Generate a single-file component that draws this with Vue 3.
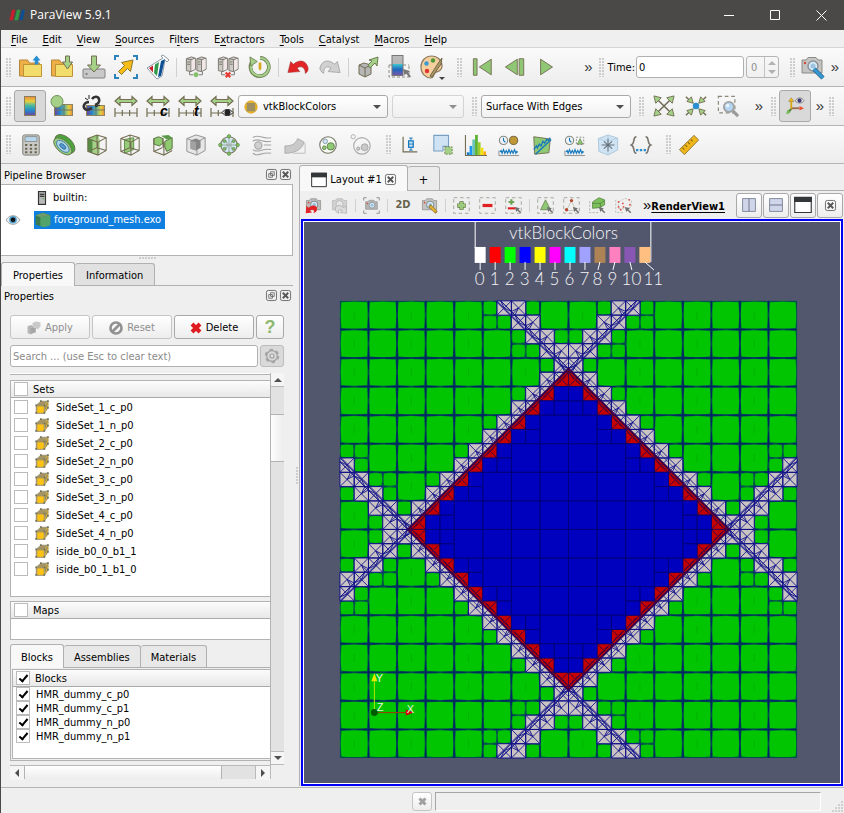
<script setup>
import { h, reactive, ref } from 'vue'

const Icon = (props) =>
  h('svg', {
    class: 'icon',
    width: props.size || 24,
    height: props.size || 24,
    viewBox: props.box || '0 0 24 24',
    'aria-hidden': 'true',
    innerHTML: icons[props.name],
  })
Icon.props = ['name', 'size', 'box']

const line = '#736d52'
const green = '#a5d088'
const server = `<g stroke="#77736a" stroke-width="1"><path d="M1.500 3l5.500-2 4.500 1.500v12l-5 2.500-5-1z" fill="#cdcac5"/><path d="M13 3l5-2 5 1.500v12l-5 2.500-5-1z" fill="#cdcac5"/><path d="M1.500 3l5 1v13M6.500 4l5-1.500M13 3l5 1v13M18 4l5-1.500M2 6.500h3.500M2 9h3.500M14 6.500h3M14 9h3" fill="none"/><path d="M7 4.500l4-1.500v11l-4 2zM18.500 4.500l4-1.500v11l-4 2z" fill="#f0e6e8" stroke="none"/><path d="M5 17v3.500h4M19 17v3.500h-4" fill="none"/></g>`
const cubeWire = `<path d="M2 5l10-4 10 3v14l-9 5-11-4zM2 5l11 4 9-5M13 9v14M12 1v14l-10 4M12 15l10 3" fill="none" stroke="${line}" stroke-width="1.100"/>`
const ruler = `<g stroke="${line}" stroke-width="1.200" fill="none"><path d="M1 19h22M1 14v9M8.300 16v6M15.600 16v6M23 14v9"/><path d="M1 7l5-4.500v3h12v-3L23 7l-5 4.500v-3H6v3z" fill="${green}"/></g>`
const wave = `<path d="M1 18v5.500h22" fill="none" stroke="#8a8a8a" stroke-width="1"/><path d="M2 19.500l1.500-1.500 1 3 1.500-4 1.500 4 1.500-3 1.500 3 1.500-4 1.500 4 1.500-3 1.500 3 1.500-4 1.500 4 1-2 1 1" fill="none" stroke="#1779bd" stroke-width="1.300"/>`
const clock = `<circle cx="6" cy="7" r="4.500" fill="#eef4fa" stroke="#8a8a80" stroke-width="1.200"/><path d="M6 4v3l2 2" fill="none" stroke="#1779bd" stroke-width="1.200"/>`
const camera = (c) => `<path d="M2 5h4l2-2.500h8L18 5h4v13H2z" fill="${c}" stroke="#8b8b87"/><circle cx="13" cy="11" r="5" fill="#d8ebf7" stroke="#8b9298" stroke-width="1.500"/><circle cx="13" cy="11" r="2.500" fill="#9cc3df"/><circle cx="5" cy="8" r="1.200" fill="#d84a3a"/>`
const dashBox = `<rect x="1" y="1" width="22" height="22" fill="none" stroke="#9c9c92" stroke-width="1.200" stroke-dasharray="5 4"/>`
const pointer = `<path d="M14 14l7 2-2 1.500 4 4-1.500 1.500-4-4L16 21z" fill="#707070"/>`

const icons = {
  logo: `<path d="M4.500 4h5L6 20H0.500z" fill="#c5202b"/><path d="M12 4h5l-3.500 16H8z" fill="#2f9a48"/><path d="M19.500 4h4.500l-3.500 16h-5z" fill="#0c4f94"/>`,
  open: `<path d="M1.500 5h8l2 3h10v13h-20z" fill="#eeb046" stroke="#b5853a"/><path d="M5.500 9.500h18v12h-18z" fill="#f2dc6c" stroke="#c09436"/><path d="M18.500 0.500l4 5h-2.200v4h-3.600v-4h-2.200z" fill="#2a8fd0"/>`,
  openRecent: `<path d="M1.500 5h8l2 3h10v13h-20z" fill="#eeb046" stroke="#b5853a"/><path d="M5.500 9.500h17v12h-17z" fill="#f2dc6c" stroke="#c09436"/><path d="M15.500 1h4v6h3l-5 7-5-7h3z" fill="${green}" stroke="${line}"/>`,
  save: `<rect x="1" y="14" width="22" height="9" rx="1" fill="#c9c9c9" stroke="#808080"/><path d="M9.500 1h5v9h4L12 17 5.500 10h4z" fill="${green}" stroke="${line}"/><circle cx="4.500" cy="19" r="1.200" fill="#888"/>`,
  extract: `<path d="M1 5V1h4M19 1h4v4M23 19v4h-4M5 23H1v-4" fill="none" stroke="#2a83bb" stroke-width="2"/><path d="M4.500 16.500l6-6-3-3L19 5l-2.500 11.500-3-3-6 6z" fill="#f6bd16" stroke="#8b7434"/>`,
  flask: `<path d="M1 13L17 3l-2-2 2-1 6 5-2 2-2-2-3 16-5 3z" fill="#fff" stroke="#8d9ba5"/><path d="M3 13l4-2.500v7z" fill="#c5202b"/><path d="M9 9.500l4-2.500-2 14-3-3z" fill="#2f9a48"/><path d="M15 6l4-2-4 17-3 1z" fill="#0c4f94"/>`,
  connect: `${server}<circle cx="12" cy="20.500" r="2.700" fill="#82c168"/>`,
  disconnect: `${server}<path d="M9.500 18l5 5M14.500 18l-5 5" stroke="#e63b34" stroke-width="2.500"/>`,
  reset: `<path d="M5 4.500A10 10 0 1 0 12 2" fill="none" stroke="#718258" stroke-width="4"/><path d="M5 5A9.800 9.800 0 1 0 12 2.200" fill="none" stroke="#a5d088" stroke-width="2.200"/><path d="M1 1l1 10 7-5z" fill="${green}" stroke="#718258"/><path d="M10.500 7h3v7l-1.500 2-1.500-2z" fill="#d5a820"/>`,
  undo: `<path d="M1 18l3-12 3 3c7-6 14-4 16 4 0 2 0 4-3 6 0-6-4-9-9-6l3 4z" fill="#e12426" stroke="#9c3633" stroke-width=".6"/>`,
  redo: `<path d="M23 18L20 6l-3 3C10 3 3 5 1 13c0 2 1 4 4 6 0-6 3-9 8-6l-3 4z" fill="#d0d0d0" stroke="#a5a5a5" stroke-width="1"/>`,
  loadState: `<path d="M3 10l5-2 7 2v9l-6 3-6-3z" fill="#b6b6b6" stroke="${line}"/><path d="M3 10l6 3 6-3M9 13v9" fill="none" stroke="${line}"/><path d="M12 10l4-4-3-1 9-3-1 9-2-3-5 5z" fill="${green}" stroke="#6c7d50"/>`,
  findData: `<rect x="4" y="0.500" width="11" height="20" fill="url(#coolBar)" stroke="#777"/><path d="M1 10v12h20V10M1 10h3M15 10h6" fill="none" stroke="#8c8c80" stroke-dasharray="3 2"/><path d="M15 14l7 2-2 1.500 3 4-1.500 1-3.500-4-1.500 2z" fill="#777"/>`,
  palette: `<path d="M12 1C5 1 1 6 1 12c0 7 5 11 10 11 3 0 2-3 4-5s7-1 7-7C22 5 17 1 12 1z" fill="#f5cf9d" stroke="#8c7a5e" stroke-width="1.200"/><circle cx="6.500" cy="8.500" r="2.200" fill="#3a9bd5"/><circle cx="13" cy="5.500" r="2.200" fill="#4e9a3a"/><circle cx="7" cy="16" r="2.200" fill="#e0352e"/><path d="M19 7l3-4-1 6-9 13-2-1z" fill="#b09b64" stroke="#6f654b"/>`,
  first: `<path d="M1.500 3h4v18h-4z" fill="#8fc774" stroke="${line}"/><path d="M21 3.500v17L8 12z" fill="#8fc774" stroke="${line}"/>`,
  back: `<path d="M14.500 3.500v17L1.500 12z" fill="#8fc774" stroke="${line}"/><path d="M16.500 3h5v18h-5z" fill="#8fc774" stroke="${line}"/>`,
  play: `<path d="M5 3.500v17L18 12z" fill="#8fc774" stroke="${line}"/>`,
  cameraLink: `${camera('#c4c4c2')}<path d="M14 14l9 9" stroke="#26688f" stroke-width="4.500"/><path d="M14 14l9 9" stroke="#3598d4" stroke-width="2.800"/>`,
  legend: `<rect x="6.500" y="2.500" width="11" height="19" fill="url(#rainbow)" stroke="#8c7d5c"/>`,
  editMap: `<rect x="4.500" y="10.500" width="18" height="11" fill="url(#rainbowX)" stroke="#8f8460"/><path d="M4 16h19M14 10v12" stroke="#6d7460"/><circle cx="7" cy="7.500" r="6" fill="${green}" stroke="#72905e"/>`,
  separateMap: `<rect x="4.500" y="11.500" width="18" height="10" fill="url(#rainbowX)" stroke="#8f8460"/><path d="M4 16h19M14 11v11" stroke="#6d7460"/><path d="M3 15c-3-3 0-7 4-7M3 15c2 2 5 0 7-1M10 5c2-3 6-3 7 0s-1 5-4 6" fill="none" stroke="#333" stroke-width="2.600"/><path d="M3 4l3 2M7 1v4M13 13l5-2" stroke="#222"/>`,
  rescale: ruler,
  rescaleC: `${ruler}<text x="14" y="22" font-family="Liberation Sans" font-size="14" font-weight="700" font-style="italic">c</text>`,
  rescaleT: `${ruler}<text x="16" y="22" font-family="Liberation Sans" font-size="14" font-weight="700" font-style="italic">t</text>`,
  rescaleEye: `${ruler}<path d="M12 18.500c3-4 8-4 11 0-3 4-8 4-11 0z" fill="#eee" stroke="#222"/><circle cx="17.500" cy="18.500" r="3" fill="#222"/>`,
  fit: `<path d="M4 4l16 16M20 4L4 20" stroke="#6e6a52" stroke-width="1.600"/><path d="M1 1l8 2-6 6zM23 1l-8 2 6 6zM1 23l8-2-6-6zM23 23l-8-2 6-6z" fill="${green}" stroke="${line}"/>`,
  fitData: `<path d="M1 2l6 6M23 2l-6 6M1 22l6-6M23 22l-6-6" stroke="#6e6a52" stroke-width="1.500"/><path d="M9 9L2 7l5-5zM15 9l7-2-5-5zM9 15l-7 2 5 5zM15 15l7 2-5 5z" fill="${green}" stroke="${line}"/><circle cx="12" cy="12" r="3.500" fill="#2a8fd0"/>`,
  zoomBox: `<rect x="1.500" y="1.500" width="18" height="18" fill="none" stroke="#8a8a78" stroke-width="1.300" stroke-dasharray="4 3"/><path d="M17 17l6 6" stroke="#9a9a9a" stroke-width="3.500"/><circle cx="13" cy="13" r="5.500" fill="#b3d5f2" stroke="#a3a3a3" stroke-width="2"/><circle cx="11.500" cy="11.500" r="2" fill="#e6f3fd"/>`,
  axes: `<path d="M7 17V6" stroke="#d9a416" stroke-width="2.500"/><path d="M7 1L3.500 6h7z" fill="#f6bd16" stroke="#8b7434" stroke-width=".7"/><path d="M8 15h10" stroke="#9b6b50" stroke-width="2.500"/><path d="M24 15l-6-3v6z" fill="#e8502a"/><path d="M7 16l-5 5" stroke="#5a8a44" stroke-width="3"/><path d="M0 23l2-6 4 4z" fill="#76c056"/><path d="M12 5c4-5 9-5 12 0-3 4-8 4-12 0z" fill="#eee" stroke="#666"/><circle cx="18" cy="4.800" r="2.800" fill="#3c3a78"/>`,
  calculator: `<rect x="3" y="1" width="18" height="22" rx="2" fill="#c9c9c7" stroke="#77776f"/><rect x="5.500" y="3" width="13" height="5" fill="#b6d7ee" stroke="#77776f" stroke-width=".7"/><path d="M5.500 12h13M5.500 16h13M5.500 20h13" stroke="#6b664f" stroke-width="2.200" stroke-dasharray="2.500 2.700"/>`,
  contour: `<g transform="rotate(42 12 12)"><ellipse cx="12" cy="10.500" rx="13" ry="7.500" fill="#4ba43b" stroke="#64744a"/><ellipse cx="12" cy="14" rx="12" ry="6.500" fill="#94ca7c" stroke="#64744a"/><ellipse cx="12" cy="14" rx="8.500" ry="4.500" fill="#a9d4e8" stroke="#4a7ea8"/><ellipse cx="12" cy="14" rx="4" ry="2" fill="#4f9ad0" stroke="#3c6d96"/></g>`,
  clip: `<path d="M2 5l10-4 2 .6v20.400l-1 1-11-4z" fill="#93c777"/><path d="M2 5l8 3v14l-8-3z" fill="#538c42"/><path d="M7 6.500l5-1.500 3 .6v15l-5 1.800-3-1z" fill="${green}"/>${cubeWire}`,
  slice: `<path d="M6 6l10-2v13l-10 4z" fill="#97cd79" stroke="#5c8a45"/>${cubeWire}`,
  threshold: `<path d="M2 5l5-2 5 2v5l-4 3-6-2zM14 8l8-4v12l-6 3-2-5z" fill="#8fca70" stroke="#536a3c"/><path d="M10 2l8-1 4 3-6 2z" fill="#5a9a46"/><path d="M2 5v14l11 4 9-5M13 9v14M2 19l9-4M12 5v10" fill="none" stroke="${line}" stroke-width="1.200"/>`,
  subset: `<path d="M2 5l10-4 10 3v14l-9 5-11-4z" fill="#e6e6e6" stroke="#8e8e8e"/><path d="M2 5l11 4 9-5M13 9v14" fill="none" stroke="#8e8e8e"/><path d="M6 7l6-2 5 2v8l-5 3-6-2z" fill="#858585"/><path d="M6 7l6 2v9l-6-2z" fill="#a2a2a2"/>`,
  glyph: `<circle cx="12" cy="12" r="9" fill="#d3e7f7" stroke="${line}" stroke-width="1.100"/><path d="M3 12h18M12 3v18M7 5c4 4 4 10 0 14M17 5c-4 4-4 10 0 14" fill="none" stroke="#8d9a8c" stroke-width=".9"/><g fill="#7cc05c" stroke="#50753c" stroke-width=".6"><circle cx="12" cy="2.500" r="1.900"/><circle cx="12" cy="21.500" r="1.900"/><circle cx="2.500" cy="12" r="1.900"/><circle cx="21.500" cy="12" r="1.900"/><circle cx="7" cy="8" r="1.500"/><circle cx="17" cy="8" r="1.500"/><circle cx="7" cy="16" r="1.500"/><circle cx="17" cy="16" r="1.500"/></g>`,
  stream: `<g fill="none" stroke="#a5a5a5" stroke-width="1.200"><path d="M2 4c6-5 9 2 20 0M2 8c6-5 9 2 20 0M14 12h8M2 17c6 5 9-2 20 0M2 21c6 5 9-2 20 0"/><circle cx="8" cy="12.500" r="4" fill="#cfcfcf"/></g>`,
  warp: `<path d="M1 21v-8c8 0 11-2 14-8l7 4c-2 6-7 12-21 12z" fill="#c9c9c9" stroke="#ababab"/><path d="M10 21h13V10" fill="none" stroke="#bbb"/>`,
  group: `<circle cx="12" cy="12" r="9" fill="#f8faf5" stroke="#777466" stroke-width="1.200"/><circle cx="15" cy="13.500" r="4" fill="#8fc973" stroke="#5b7f48"/><circle cx="8" cy="15" r="2" fill="#8fc973" stroke="#5b7f48"/><circle cx="9" cy="8" r="2.500" fill="#cfe5f4" stroke="#89a"/>`,
  extractBlock: `<circle cx="13" cy="13" r="9" fill="none" stroke="#aaa" stroke-width="1.200"/><circle cx="16" cy="14.500" r="3.800" fill="#c9c9c9" stroke="#a5a5a5"/><circle cx="9" cy="16" r="1.800" fill="#c9c9c9" stroke="#a5a5a5"/><circle cx="3.500" cy="3" r="2.300" fill="none" stroke="#aaa"/>`,
  boxPlot: `<path d="M4.500 3v16.500H20" fill="none" stroke="${line}" stroke-width="1.300"/><path d="M13 4v14M11 4.500h4M11 17.500h4" stroke="#1779bd"/><rect x="10.500" y="7.500" width="5" height="7" fill="#cfe5f7" stroke="#1779bd" stroke-width="1.400"/><path d="M10 11h6" stroke="#1779bd"/>`,
  extractSel: `<path d="M2 1.500h16v12h-6v5H2z" fill="#cfe3f5" stroke="#79a0c2" stroke-width="1.200"/><rect x="14" y="14" width="8" height="8" fill="${green}" stroke="#6f7d4e" stroke-dasharray="2 1.500"/>`,
  histogram: `<path d="M2 20h3v3H2z" fill="#1779bd"/><path d="M5 13h3v10H5z" fill="#1b98f5"/><path d="M8 6h3v17H8z" fill="#69c3b8"/><path d="M11 1h3v22h-3z" fill="#5ab12f"/><path d="M14 9h3v14h-3z" fill="#9bcb2e"/><path d="M17 15h3v8h-3z" fill="#f8e000"/><path d="M20 19h3v4h-3z" fill="#f6ac13"/><path d="M.500 1v22.500H24" fill="none" stroke="${line}" stroke-width="1.200"/>`,
  plotGlobal: `${clock}<circle cx="17" cy="7" r="4.500" fill="#bf9734" stroke="#7c6c48" stroke-width="1.200"/>${wave}`,
  plotLine: `<path d="M3 3l18 2.500-1.500 15L4 22z" fill="#8fc973" stroke="${line}"/><path d="M3 17l3-4 1 2 2-4 2 2 2-5 2 2 2-4 2 1 2-3" fill="none" stroke="#1779bd" stroke-width="1.500"/><path d="M5 22L22 6" stroke="#1779bd" stroke-width="1.500"/>`,
  plotSel: `${clock}<rect x="13.500" y="3.500" width="8" height="8" fill="none" stroke="#888" stroke-dasharray="2 1.500"/><path d="M17.500 5l3 6h-6z" fill="#8fc973" stroke="#58733d" stroke-width=".6"/>${wave}`,
  probe: `<path d="M1.500 5L12 1l10.500 3.500v13L12 23 2 19z" fill="#cfe3f3" stroke="#a9c6dc"/><path d="M12 1v4M12 19v4M1.500 5l10.500 3 10.500-3.500" fill="none" stroke="#b4cfe2"/><path d="M12 5v14M5 12h14M7.500 8l9 8M16.500 8l-9 8" stroke="#66727c" stroke-width="1.200"/>`,
  programmable: `<path d="M7 3C2.500 3 6 10 1.500 12c4.500 2 1 9 5.500 9M17 3c4.500 0 1 7 5.500 9-4.500 2-1 9-5.500 9" fill="none" stroke="#77736a" stroke-width="1.700"/><path d="M6.500 17.500h11" stroke="#2a8fd0" stroke-width="2.400" stroke-dasharray="2.600 1.600"/>`,
  measure: `<path d="M1.500 17L17.500 1.500l5 5L7 22.500z" fill="#f0b71a" stroke="#8b7434"/><path d="M5 15l2 2M8 12l2 2M11 9l2 2M14 6l2 2" stroke="#8b6a10" stroke-width="1.200"/>`,
  camUndo: `${camera('#bdbdbb')}<path d="M1 23l1-11 3 3c7-5 12-3 12 2 0 3-2 5-5 6 2-5-1-6-5-4l3 3z" fill="#e12426"/>`,
  camRedo: `<path d="M2 5h4l2-2.500h8L18 5h4v13H2z" fill="#d2d2d2" stroke="#b5b5b5"/><circle cx="12" cy="10" r="5" fill="#e6e6e6" stroke="#b0b0b0"/><path d="M22 23l-1-11-3 3c-7-5-12-3-12 2 0 3 2 5 5 6-2-5 1-6 5-4l-3 3z" fill="#dcdcdc" stroke="#aaa"/>`,
  capture: `<g transform="translate(2 2.500) scale(.83)">${camera('#b5b5b3')}</g><path d="M1 5V1h4M19 1h4v4M23 19v4h-4M5 23H1v-4" fill="none" stroke="#8b8b8b" stroke-width="1.300"/>`,
  camEdit: `${camera('#c4c4c2')}<path d="M12 12l10 10" stroke="#8d7430" stroke-width="4.500"/><path d="M13 13l8 8" stroke="#eeb62e" stroke-width="2.800"/>`,
  selAdd: `${dashBox}<path d="M12 6v12M6 12h12" stroke="#657a45" stroke-width="6"/><path d="M12 7v10M7 12h10" stroke="#9acb7a" stroke-width="4"/>`,
  selSub: `${dashBox}<path d="M5 12h14" stroke="#e02020" stroke-width="4.500"/>`,
  selToggle: `${dashBox}<path d="M9 3v8M5 7h8" stroke="#6fa455" stroke-width="3"/><path d="M4 16h11" stroke="#e02020" stroke-width="3"/>${pointer}`,
  selCell: `${dashBox}<path d="M12 4l7 14H5z" fill="#8fc973" stroke="#64744a"/>${pointer}`,
  selPoint: `${dashBox}<path d="M12 5l6 14H5z" fill="none" stroke="#b5b5a8"/><circle cx="12" cy="5" r="2.300" fill="#b4472d"/><circle cx="5" cy="18" r="2.300" fill="#b4472d"/>${pointer}`,
  frustumCell: `<path d="M1 6v16h12" fill="none" stroke="#9c9c92" stroke-dasharray="3 2"/><path d="M5 7l9-6 8 3v7l-7 4-10 1z" fill="#7cc05c" stroke="#4f7a38"/><path d="M5 9l11 0 6-4M16 9v6" fill="none" stroke="#4f7a38"/>${pointer}`,
  frustumPoint: `<path d="M1 4v18h12M5 7l9-5 9 3v9l-8 3-10-1z" fill="none" stroke="#b0b0a8" stroke-dasharray="3 2"/><path d="M5 7h.1M11 9h.1M20 4h.1M5 14h.1M12 14h.1M21 11h.1M8 18h.1" stroke="#e05a50" stroke-width="2.600" stroke-linecap="round"/>${pointer}`,
  splitH: `<path d="M1 1h22v22H1z" fill="#cfd6ec" stroke="#7f8493" stroke-width="1.600"/><path d="M12 1v22" stroke="#7f8493" stroke-width="2"/>`,
  splitV: `<path d="M1 1h22v22H1z" fill="#cfd6ec" stroke="#7f8493" stroke-width="1.600"/><path d="M1 12h22" stroke="#7f8493" stroke-width="2"/>`,
  window: `<path d="M1 2h22v20H1z" fill="#fff" stroke="#333739" stroke-width="1.500"/><path d="M0 1h24v7H0z" fill="#333739"/>`,
  float: `<rect x="1" y="1" width="22" height="22" rx="4" fill="none" stroke="#666" stroke-width="2"/><path d="M10 6h8v8h-8zM6 10h8v8H6z" fill="#efefef" stroke="#666" stroke-width="1.800"/>`,
  close: `<rect x="1" y="1" width="22" height="22" rx="4" fill="none" stroke="#666" stroke-width="2"/><path d="M6 6l12 12M18 6L6 18" stroke="#555" stroke-width="4"/>`,
  server: `<rect x="6" y="1" width="12" height="22" fill="#b9b9b9" stroke="#333" stroke-width="2"/><path d="M8 5.500h8M8 9h8" stroke="#111" stroke-width="1.800"/><path d="M13 13h2" stroke="#4a4" stroke-width="2"/>`,
  eye: `<path d="M0 12c6-10 18-10 24 0-6 10-18 10-24 0z" fill="#e6eef4" stroke="#9a9a9a" stroke-width="1.500"/><circle cx="12" cy="11.500" r="6.500" fill="#4d9cc9"/><circle cx="12" cy="11.500" r="4" fill="#111"/>`,
  mesh: `<path d="M1 5l11-4 11 4v14l-9 4-13-4z" fill="#3b7a51"/><path d="M8 8l15-3v15l-9 3-6-2z" fill="#53a46b"/><path d="M1 5l11-4 11 4-15 3z" fill="#6f9a6a"/>`,
  set: `<path d="M2 9l8-7h13l-7 7v14H2z" fill="#a59463" stroke="#8b8262"/><path d="M16 9l7-7v12l-7 9z" fill="#9a905f"/><path d="M4 11h11v11H4z" fill="#fcc315"/><path d="M15 10l8-8M17 20l6-14" stroke="#e4b52a" stroke-width="1.500"/><path d="M2 9h.1M10 2h.1M22 2h.1M16 9h.1M2 22h.1M16 22h.1M22 13h.1" stroke="#77745e" stroke-width="3" stroke-linecap="square"/>`,
  apply: `<path d="M1 9l6-2 5 2v11l-5 3-6-2z" fill="#b5b5b5"/><path d="M9 4l6-3 8 1v7l-4 5-8-3z" fill="#c9c9c9"/><path d="M6 12h9v8H6z" fill="#a5a5a5"/>`,
  ban: `<circle cx="12" cy="12" r="9.500" fill="none" stroke="#919191" stroke-width="4.500"/><path d="M6 18L18 6" stroke="#919191" stroke-width="4.500"/>`,
  cross: `<path d="M4 4l16 16M20 4L4 20" stroke="#e01b1f" stroke-width="8"/>`,
  crossGray: `<path d="M4 4l16 16M20 4L4 20" stroke="#a0a0a0" stroke-width="8"/>`,
  gear: `<circle cx="12" cy="12" r="8.500" fill="none" stroke="#a8a8a8" stroke-width="5" stroke-dasharray="4.700 4.200"/><circle cx="12" cy="12" r="8" fill="#d8d8d8" stroke="#a0a0a0" stroke-width="1.800"/><circle cx="12" cy="12" r="3" fill="#e5e5e5" stroke="#a0a0a0" stroke-width="1.800"/>`,
  block: `<circle cx="12" cy="12" r="10.500" fill="#fbbf18" stroke="#d89c17" stroke-width="1.500"/><rect x="4.500" y="4.500" width="15" height="15" rx="2" fill="#9d8f62"/>`,
}

const menus = [['', 'F', 'ile'], ['', 'E', 'dit'], ['', 'V', 'iew'], ['', 'S', 'ources'], ['Fi', 'l', 'ters'], ['E', 'x', 'tractors'], ['', 'T', 'ools'], ['', 'C', 'atalyst'], ['', 'M', 'acros'], ['', 'H', 'elp']]
const filters = ['calculator', 'contour', 'clip', 'slice', 'threshold', 'subset', 'glyph', 'stream', 'warp', 'group', 'extractBlock']
const analysis = ['boxPlot', 'extractSel', 'histogram', 'plotGlobal', 'plotLine', 'plotSel', 'probe', 'programmable']
const colorTools = ['editMap', 'separateMap', 'rescale', 'rescaleC', 'rescaleT', 'rescaleEye']
const viewTools = [['camUndo', 'camRedo'], ['capture'], ['mode2d', 'camEdit'], ['selAdd', 'selSub', 'selToggle'], ['selCell', 'selPoint', 'frustumCell', 'frustumPoint']]

const allSets = ref(false)
const maps = ref(false)
const allBlocks = ref(true)
const time = ref('0')
const sets = reactive(
  ['SideSet_1_c_p0', 'SideSet_1_n_p0', 'SideSet_2_c_p0', 'SideSet_2_n_p0', 'SideSet_3_c_p0', 'SideSet_3_n_p0', 'SideSet_4_c_p0', 'SideSet_4_n_p0', 'iside_b0_0_b1_1', 'iside_b0_1_b1_0'].map((name) => ({ name, on: false })),
)
const blocks = reactive(['HMR_dummy_c_p0', 'HMR_dummy_c_p1', 'HMR_dummy_n_p0', 'HMR_dummy_n_p1'].map((name) => ({ name, on: true })))

const legendColors = ['#ffffff', '#ff0000', '#00ff00', '#0000ff', '#ffff00', '#ff00ff', '#00ffff', '#a1a1ff', '#ad8254', '#ff80bf', '#8757b3', '#ffbf80']
const labelX = [480, 495, 510, 525, 540, 555, 570, 585, 598, 613, 632, 654]
const legend = legendColors.map((color, i) => ({ color, x: 475 + i * 15, label: labelX[i], i }))

// Quadtree mesh: 16 x 16 blocks, split once where an interface line passes.
const N = 32
const S = 458 / N
const X0 = 340
const Y0 = 301
const fold = (i) => (i < N / 2 ? i : N - 1 - i)
const edgeIn = (c, r) => fold(c) + fold(r)
const diff = (c, r) => fold(c) - fold(r)
const onDiamond = (c, r) => edgeIn(c, r) === 19 || edgeIn(c, r) === 20
const onArm = (c, r) => {
  const d = Math.abs(diff(c, r))
  return (d === 11 || d === 12) && edgeIn(c, r) < 20
}
const cut = (c, r) => (onDiamond(c, r) && Math.abs(diff(c, r)) < 12) || onArm(c, r)
const pt = (c, r, x, y) => {
  const u = c < N / 2 ? c + x : c + 1 - x
  const v = r < N / 2 ? r + y : r + 1 - y
  return `${(X0 + u * S).toFixed(1)} ${(Y0 + v * S).toFixed(1)}`
}
const poly = (c, r, pts) => 'M' + pts.map(([x, y]) => pt(c, r, x, y)).join('L') + 'Z'
const seg = (c, r, a, b) => `M${pt(c, r, ...a)}L${pt(c, r, ...b)}`

const mesh = { green: '', blue: '', grey: '', red: '', greyLines: '', redLines: '', ticks: '', lightTicks: '' }
function solid(c, r, n) {
  const x = X0 + c * S
  const y = Y0 + r * S
  const w = n * S
  if (edgeIn(c, r) > 20) {
    mesh.blue += `M${x} ${y}h${w}v${w}h${-w}z`
    return
  }
  const i = n === 2 ? 1.5 : 1.2
  const b = 0.3
  const m = w / 2
  mesh.green += `M${x + i} ${y + i}Q${x + m} ${y + b} ${x + w - i} ${y + i}Q${x + w - b} ${y + m} ${x + w - i} ${y + w - i}Q${x + m} ${y + w - b} ${x + i} ${y + w - i}Q${x + b} ${y + m} ${x + i} ${y + i}Z`
  mesh.lightTicks += `M${x + m - 3} ${y}h6M${x} ${y + m - 3}v6`
  if (n === 2 && (c / 2) % 2 === 0) mesh.ticks += `M${x + m} ${y + m - 4}v8`
}
for (let br = 0; br < N; br += 2) {
  for (let bc = 0; bc < N; bc += 2) {
    const cells = [[bc, br], [bc + 1, br], [bc, br + 1], [bc + 1, br + 1]]
    if (!cells.some(([c, r]) => cut(c, r))) {
      solid(bc, br, 2)
      continue
    }
    for (const [c, r] of cells) {
      if (!cut(c, r)) {
        solid(c, r, 1)
        continue
      }
      mesh.grey += poly(c, r, [[0, 0], [1, 0], [1, 1], [0, 1]])
      let lines = seg(c, r, [0, 0], [1, 1]) + seg(c, r, [1, 0], [0, 1])
      const mid = [0.5, 0.5]
      const s = edgeIn(c, r)
      if (onDiamond(c, r)) {
        const [p, q] = s === 20 ? [[0.75, 0], [0, 0.75]] : [[1, 0.75], [0.75, 1]]
        lines += seg(c, r, mid, p) + seg(c, r, mid, q)
        if (s === 20) {
          mesh.red += poly(c, r, [p, [1, 0], [1, 1], [0, 1], q])
          mesh.redLines += seg(c, r, [0.4, 0.4], [1, 1]) + seg(c, r, [0.6, 0.5], [1, 0]) + seg(c, r, [0.5, 0.6], [0, 1]) + seg(c, r, [1, 0], [0.2, 0.8])
        } else {
          mesh.red += poly(c, r, [p, [1, 1], q])
        }
      }
      const d = diff(c, r)
      if (onArm(c, r)) {
        let p = Math.abs(d) === 11 ? [0.25, 0] : [0, 0.75]
        let q = Math.abs(d) === 11 ? [1, 0.75] : [0.25, 1]
        if (d < 0) {
          p = [p[1], p[0]]
          q = [q[1], q[0]]
        }
        lines += seg(c, r, mid, p) + seg(c, r, mid, q) + seg(c, r, p, q)
      }
      mesh.greyLines += lines
    }
  }
}

const P = (u, v) => `${X0 + u * S} ${Y0 + v * S}`
const diamond = `M${P(16, 4.75)}L${P(27.25, 16)}L${P(16, 27.25)}L${P(4.75, 16)}Z`
const arms = [0, 0.35]
  .map((o) => {
    const a = 11.25 - o
    const v = 4.75 + o
    return [
      [a, 0, 16, v], [N - a, 0, 16, v], [a, N, 16, N - v], [N - a, N, 16, N - v],
      [0, a, v, 16], [0, N - a, v, 16], [N, a, N - v, 16], [N, N - a, N - v, 16],
    ].map(([x1, y1, x2, y2]) => `M${P(x1, y1)}L${P(x2, y2)}`).join('')
  })
  .join('')
const halo = `M${P(16, 4.3)}L${P(27.7, 16)}L${P(16, 27.7)}L${P(4.3, 16)}Z`
const gridA = []
const gridB = []
for (let i = 1; i < 16; i++) {
  const p = i * 2 * S
  ;(i % 2 ? gridA : gridB).push(`M${X0 + p} ${Y0}v458M${X0} ${Y0 + p}h458`)
}
const gridThin = gridA.join('')
const gridThick = gridB.join('')
</script>

<template>
  <div class="window">
    <svg class="defs" width="0" height="0" aria-hidden="true">
      <defs>
        <linearGradient id="rainbow" x1="0" y1="0" x2="0" y2="1">
          <stop offset="0" stop-color="#e88a3c" /><stop offset=".25" stop-color="#e8cf3e" /><stop offset=".5" stop-color="#3fb5a8" /><stop offset=".75" stop-color="#2a84cc" /><stop offset="1" stop-color="#6b459c" />
        </linearGradient>
        <linearGradient id="rainbowX">
          <stop offset="0" stop-color="#6b459c" /><stop offset=".3" stop-color="#2a84cc" /><stop offset=".55" stop-color="#5fb59a" /><stop offset=".8" stop-color="#e8cf3e" /><stop offset="1" stop-color="#e88a3c" />
        </linearGradient>
        <linearGradient id="coolBar" x1="0" y1="0" x2="0" y2="1">
          <stop offset="0" stop-color="#bcbcbc" /><stop offset=".4" stop-color="#b5b5b5" /><stop offset=".45" stop-color="#3ac0cf" /><stop offset=".7" stop-color="#2068c0" /><stop offset="1" stop-color="#7b55a8" />
        </linearGradient>
      </defs>
    </svg>

    <header class="title-bar">
      <Icon name="logo" :size="16" />
      <span class="title">ParaView 5.9.1</span>
      <div class="win-buttons">
        <button aria-label="Minimize"><svg width="11" height="11"><path d="M0 5.500h10" stroke="#fff" /></svg></button>
        <button aria-label="Maximize"><svg width="11" height="11"><path d="M.5.500h9v9h-9z" fill="none" stroke="#fff" /></svg></button>
        <button aria-label="Close"><svg width="11" height="11"><path d="M.5.500l10 10M10.500.500l-10 10" stroke="#fff" /></svg></button>
      </div>
    </header>

    <nav class="menu-bar">
      <a v-for="m in menus" :key="m[1] + m[2]" href="#">{{ m[0] }}<u>{{ m[1] }}</u>{{ m[2] }}</a>
    </nav>

    <div class="toolbar">
      <i class="grip"></i>
      <div class="group">
        <button v-for="n in ['open', 'openRecent', 'save', 'extract', 'flask']" :key="n" :aria-label="n"><Icon :name="n" /></button>
        <i class="sep"></i>
        <button v-for="n in ['connect', 'disconnect', 'reset']" :key="n" :aria-label="n"><Icon :name="n" :size="22" /></button>
        <i class="sep"></i>
        <button v-for="n in ['undo', 'redo']" :key="n" :aria-label="n"><Icon :name="n" :size="22" /></button>
        <i class="sep"></i>
        <button v-for="n in ['loadState', 'findData']" :key="n" :aria-label="n"><Icon :name="n" /></button>
        <button class="drop" aria-label="palette"><Icon name="palette" /></button>
      </div>
      <i class="grip"></i>
      <div class="group">
        <button v-for="n in ['first', 'back', 'play']" :key="n" :aria-label="n"><Icon :name="n" :size="22" /></button>
      </div>
      <button class="more wide">»</button>
      <i class="grip"></i>
      <label class="time-label" for="time">Time:</label>
      <input id="time" v-model="time" class="field time" type="text" />
      <div class="spin">
        <input type="text" value="0" aria-label="Time step" disabled />
        <span class="arrows"><i class="up"></i><i class="down"></i></span>
      </div>
      <i class="grip"></i>
      <button class="narrow" aria-label="Camera link"><Icon name="cameraLink" /></button>
      <button class="more">»</button>
    </div>

    <div class="toolbar">
      <i class="grip"></i>
      <div class="group">
        <button class="checked" aria-label="Color legend"><Icon name="legend" /></button>
        <button v-for="n in colorTools" :key="n" :aria-label="n"><Icon :name="n" /></button>
      </div>
      <div class="combo">
        <Icon class="combo-icon" name="block" :size="14" />
        <select class="with-icon" aria-label="Color by"><option>vtkBlockColors</option></select>
      </div>
      <div class="combo small off"><select aria-label="Component" disabled><option></option></select></div>
      <i class="grip"></i>
      <div class="combo"><select aria-label="Representation"><option>Surface With Edges</option></select></div>
      <i class="grip"></i>
      <div class="group">
        <button v-for="n in ['fit', 'fitData', 'zoomBox']" :key="n" :aria-label="n"><Icon :name="n" :size="22" /></button>
      </div>
      <button class="more push">»</button>
      <i class="grip"></i>
      <button class="checked" aria-label="Orientation axes"><Icon name="axes" :size="18" /></button>
      <button class="more">»</button>
      <i class="grip"></i>
    </div>

    <div class="toolbar last">
      <i class="grip"></i>
      <div class="group loose">
        <button v-for="n in filters" :key="n" :aria-label="n"><Icon :name="n" :size="22" /></button>
      </div>
      <i class="grip"></i>
      <div class="group loose">
        <button v-for="n in analysis" :key="n" :aria-label="n"><Icon :name="n" :size="22" /></button>
      </div>
      <i class="grip"></i>
      <button aria-label="Ruler"><Icon name="measure" :size="22" /></button>
    </div>

    <main class="content">
      <aside class="side">
        <div class="dock-title">
          <span>Pipeline Browser</span>
          <button aria-label="Float"><Icon name="float" :size="11" /></button>
          <button aria-label="Close"><Icon name="close" :size="11" /></button>
        </div>
        <ul class="pipeline">
          <li><span class="vis"></span><span class="node"><Icon name="server" :size="14" /></span><span>builtin:</span></li>
          <li>
            <span class="vis"><Icon name="eye" :size="14" /></span>
            <span class="picked"><Icon name="mesh" :size="16" />foreground_mesh.exo</span>
          </li>
        </ul>
        <div class="h-handle"></div>
        <div class="tabs dock-tabs">
          <button class="tab active">Properties</button>
          <button class="tab">Information</button>
        </div>
        <div class="dock-title">
          <span>Properties</span>
          <button aria-label="Float"><Icon name="float" :size="11" /></button>
          <button aria-label="Close"><Icon name="close" :size="11" /></button>
        </div>

        <div class="props">
          <div class="actions">
            <button class="btn" disabled><Icon name="apply" :size="14" />Apply</button>
            <button class="btn" disabled><Icon name="ban" :size="14" />Reset</button>
            <button class="btn"><Icon name="cross" :size="12" />Delete</button>
            <button class="btn help">?</button>
          </div>
          <div class="search">
            <input class="field" type="text" aria-label="Search" placeholder="Search ... (use Esc to clear text)" />
            <button class="btn gear" aria-label="Advanced"><Icon name="gear" :size="16" /></button>
          </div>

          <div class="scroll">
            <div class="scroll-body">
              <div class="top-edge"></div>
              <section class="list sets">
                <label class="list-head"><input v-model="allSets" type="checkbox" />Sets</label>
                <label v-for="s in sets" :key="s.name" class="set-row"><input v-model="s.on" type="checkbox" /><Icon name="set" :size="14" />{{ s.name }}</label>
              </section>
              <section class="list maps">
                <label class="list-head"><input v-model="maps" type="checkbox" />Maps</label>
              </section>
              <div class="tabs inner-tabs">
                <button class="tab active">Blocks</button>
                <button class="tab">Assemblies</button>
                <button class="tab">Materials</button>
              </div>
              <div class="tab-page">
                <section class="list blocks">
                  <label class="list-head"><input v-model="allBlocks" type="checkbox" />Blocks</label>
                  <label v-for="b in blocks" :key="b.name" class="block-row"><input v-model="b.on" type="checkbox" />{{ b.name }}</label>
                </section>
              </div>
            </div>
            <div class="v-bar">
              <span class="bar-btn"><i class="up"></i></span>
              <span class="v-thumb"></span>
              <span class="bar-btn end"><i class="down"></i></span>
            </div>
          </div>
          <div class="h-bar">
            <span class="bar-btn"><i class="left"></i></span>
            <span class="h-thumb"></span>
            <span class="h-track"></span>
            <span class="bar-btn"><i class="right"></i></span>
          </div>
        </div>
      </aside>

      <div class="v-handle"></div>

      <section class="view">
        <div class="tabs view-tabs">
          <button class="tab active"><Icon name="window" :size="16" />Layout #1<Icon name="close" :size="11" /></button>
          <button class="tab plus">+</button>
        </div>
        <div class="view-frame">
          <div class="view-bar">
            <template v-for="(g, gi) in viewTools" :key="gi">
              <i v-if="gi" class="sep"></i>
              <button v-for="n in g" :key="n" :aria-label="n">
                <b v-if="n === 'mode2d'">2D</b>
                <Icon v-else :name="n" :size="17" />
              </button>
            </template>
            <span class="view-name">»<a href="#">RenderView1</a></span>
            <span class="frame-buttons">
              <button class="btn" aria-label="Split horizontal"><Icon name="splitH" :size="14" /></button>
              <button class="btn" aria-label="Split vertical"><Icon name="splitV" :size="14" /></button>
              <button class="btn" aria-label="Maximize"><Icon name="window" :size="18" /></button>
              <button class="btn" aria-label="Close view"><Icon name="close" :size="11" /></button>
            </span>
          </div>
          <div class="render">
            <svg class="scene" viewBox="304 222 537 562" role="img" aria-label="Block colored mesh">
              <rect :x="X0" :y="Y0" width="458" height="458" fill="#00504f" />
              <path :d="gridThick" stroke="#00385c" stroke-width="2" />
              <path :d="mesh.green" fill="#00c500" />
              <path :d="gridThin" stroke="#00106c" stroke-opacity=".7" />
              <path :d="gridThick" stroke="#00206c" stroke-opacity=".55" />
              <path :d="mesh.lightTicks" stroke="#00a020" stroke-opacity=".35" />
              <path :d="mesh.ticks" stroke="#00a000" stroke-opacity=".7" stroke-width=".7" />
              <path :d="mesh.grey" fill="#c9c4c2" stroke="#10108a" stroke-width="1" />
              <path :d="mesh.greyLines" fill="none" stroke="#12128c" stroke-width=".9" />
              <path :d="arms" stroke="#14148a" stroke-width="1" />
              <path :d="halo" fill="none" stroke="#14148a" stroke-opacity=".8" stroke-width=".8" />
              <path :d="mesh.red" fill="#c60000" stroke="#3c0048" stroke-width=".9" />
              <path :d="mesh.redLines" fill="none" stroke="#46003c" stroke-width="1" />
              <path :d="mesh.blue" fill="#0000bf" stroke="#000078" stroke-width=".8" />
              <path :d="diamond" fill="none" stroke="#38004c" stroke-width="2" />

              <path d="M475.500 222v26M651.500 222v40" stroke="#fff" />
              <text class="vtk" x="564" y="239" text-anchor="middle">vtkBlockColors</text>
              <g v-for="l in legend" :key="l.i">
                <rect :x="l.x" y="247" width="11" height="16" :fill="l.color" />
                <path :d="`M${l.x + 5.5} 262L${l.label + 0.5} 270`" stroke="#fff" />
                <text class="vtk" :x="l.label" y="285" text-anchor="middle">{{ l.i }}</text>
              </g>

              <path d="M374.500 712V682" stroke="#b4e800" />
              <path d="M374.500 674l3 8h-6z" fill="#e8e800" />
              <path d="M378 713.500h30" stroke="#a03c00" />
              <path d="M414 713.500l-8-3v6z" fill="#d80000" />
              <circle cx="374.500" cy="713.500" r="3.500" fill="#005a00" />
              <text class="axis" x="376" y="683">Y</text>
              <text class="axis" x="377" y="712">Z</text>
              <text class="axis" x="407" y="714">X</text>
            </svg>
          </div>
        </div>
      </section>
    </main>

    <footer class="status">
      <button class="btn" aria-label="Abort" disabled><Icon name="crossGray" :size="9" /></button>
      <div class="progress"></div>
      <svg class="size-grip" width="12" height="12" aria-hidden="true"><path d="M9 1h2M6 4h2M9 4h2M3 7h2M6 7h2M9 7h2M0 10h2M3 10h2M6 10h2M9 10h2" stroke="#c5c5c5" stroke-width="1.500" /></svg>
    </footer>
  </div>
</template>

<style>
body {
  background: #efefef;
}
</style>

<style scoped>
.window {
  box-sizing: border-box;
  display: flex;
  flex-direction: column;
  min-height: 100vh;
  border-left: 1px solid #4b4947;
  background: #efefef;
  color: #000;
  font: 11px/14px "DejaVu Sans Condensed", "Noto Sans", sans-serif;
}
.window *, .window *::before {
  box-sizing: border-box;
}
button, input, select {
  margin: 0;
  padding: 0;
  border: 0;
  background: none;
  color: inherit;
  font: inherit;
}
.defs {
  position: absolute;
}
.icon {
  display: block;
  flex: none;
  overflow: visible;
}
.title-bar {
  display: flex;
  align-items: center;
  height: 30px;
  padding-left: 8px;
  background: #4b4947;
  color: #fff;
}
.title {
  flex: 1;
  padding-left: 5px;
  font: 12px/16px "Open Sans", "Noto Sans", sans-serif;
}
.win-buttons {
  display: flex;
}
.win-buttons button {
  display: grid;
  place-items: center;
  width: 46px;
  height: 30px;
}
.menu-bar {
  display: flex;
  gap: 15px;
  height: 18px;
  padding: 3px 10px 0;
  border-bottom: 1px solid #d5d5d5;
}
.menu-bar a {
  color: #000;
  text-decoration: none;
}
.menu-bar u {
  text-underline-offset: 2px;
}
.toolbar {
  display: flex;
  align-items: center;
  height: 39px;
  padding-left: 5px;
  border-bottom: 1px solid #b5b5b5;
  background: linear-gradient(#fafafa, #ededed);
}
.toolbar.last {
  height: 38px;
}
.toolbar button {
  display: grid;
  flex: none;
  place-items: center;
  width: 32px;
  height: 32px;
}
.toolbar button.narrow {
  width: 28px;
}
.group {
  display: flex;
  align-items: center;
}
.group.loose button {
  width: 33px;
}
.toolbar button.checked {
  border: 1px solid #a9a9a9;
  border-radius: 3px;
  background: #d9d9d9;
}
.toolbar .drop {
  position: relative;
}
.drop::after {
  content: "";
  position: absolute;
  right: 3px;
  bottom: 3px;
  border: 3px solid transparent;
  border-top-color: #444;
  border-bottom: 0;
}
.grip {
  flex: none;
  width: 5px;
  height: 19px;
  margin-right: 3px;
  background: radial-gradient(circle at 1px 1px, #cdcdcd 0.8px, transparent 1px) 0 0 / 3px 3px;
}
.group + .grip {
  margin: 0 5px 0 9px;
}
.group.loose + .grip {
  margin-right: 2px;
}
.sep {
  flex: none;
  width: 1px;
  height: 19px;
  margin: 0 3px 0 2px;
  background: #d0d0d0;
}
.toolbar .more {
  width: 18px;
  color: #333;
  font: 15px/18px "Liberation Sans", sans-serif;
}
.toolbar .more.wide {
  margin: 0 2px 0 auto;
}
.toolbar .more.push {
  margin: 0 3px 0 6px;
}
.time-label {
  padding-top: 2px;
  margin-right: 1px;
}
.field {
  height: 22px;
  padding: 1px 2px 0;
  border: 1px solid #b0b0b0;
  border-radius: 3px;
  background: #fff;
}
.time {
  width: 108px;
}
.spin {
  display: flex;
  width: 33px;
  height: 22px;
  margin: 0 11px 0 2px;
  border: 1px solid #b5b5b5;
  border-radius: 3px;
}
.spin input {
  width: 18px;
  padding: 1px 0 0 4px;
  border-right: 1px solid #c2c2c2;
  color: #909090;
}
.arrows {
  display: flex;
  flex: 1;
  flex-direction: column;
  align-items: center;
  justify-content: center;
  gap: 5px;
  opacity: 0.4;
}
.up, .down, .left, .right {
  border: 4px solid transparent;
}
.up {
  border-top: 0;
  border-bottom-color: #4f4f4f;
}
.down {
  border-bottom: 0;
  border-top-color: #4f4f4f;
}
.left {
  border-left: 0;
  border-right-color: #4f4f4f;
}
.right {
  border-right: 0;
  border-left-color: #4f4f4f;
}
.combo {
  position: relative;
  width: 150px;
}
.combo.small {
  width: 72px;
  margin-left: 4px;
}
.combo + .grip {
  margin: 0 4px 0 8px;
}
.combo select {
  display: block;
  width: 100%;
  height: 23px;
  padding: 2px 4px 0;
  border: 1px solid #a9a9a9;
  border-radius: 3px;
  background: linear-gradient(#fff, #f1f1f1);
  appearance: none;
}
.combo select.with-icon {
  padding-left: 24px;
}
.combo::after {
  content: "";
  position: absolute;
  top: 10px;
  right: 7px;
  border: 4px solid transparent;
  border-top-color: #4f4f4f;
  border-bottom: 0;
}
.combo.off {
  opacity: 0.6;
}
.combo-icon {
  position: absolute;
  top: 5px;
  left: 6px;
}
.content {
  display: grid;
  flex: 1;
  grid-template-columns: 292px 6px minmax(0, 1fr);
}
.side {
  min-width: 0;
}
.dock-title {
  display: flex;
  align-items: center;
  gap: 3px;
  height: 19px;
  padding: 0 2px 0 3px;
}
.dock-title span {
  flex: 1;
  padding-top: 2px;
}
.dock-title:first-child {
  height: 20px;
  padding-top: 1px;
}
.pipeline {
  height: 72px;
  margin: 0;
  padding: 4px 0 0;
  border: 1px solid #b3b3b3;
  border-left: 0;
  background: #fff;
  list-style: none;
}
.pipeline li {
  display: flex;
  align-items: center;
  gap: 3px;
  height: 18px;
  margin-bottom: 4px;
}
.node {
  padding: 0 1px;
}
.vis {
  width: 30px;
  padding-left: 5px;
}
.picked {
  display: flex;
  align-items: center;
  gap: 3px;
  height: 18px;
  padding: 0 4px 0 1px;
  background: #0f7fe0;
  color: #fff;
}
.h-handle {
  width: 17px;
  height: 6px;
  margin: 0 auto;
  background: radial-gradient(circle at 1px 2px, #cdcdcd 0.8px, transparent 1px) 0 0 / 3px 6px;
}
.tabs {
  display: flex;
  align-items: flex-end;
  border-bottom: 1px solid #b0b0b0;
}
.tab {
  height: 22px;
  padding-top: 2px;
  border: 1px solid #b0b0b0;
  border-bottom: 0;
  border-left-width: 0;
  border-radius: 3px 3px 0 0;
  background: #e1e1e1;
}
.tab.active {
  height: 24px;
  margin-bottom: -1px;
  border-left-width: 1px;
  background: #f8f8f8;
}
.dock-tabs .tab {
  padding: 2px 11px 0;
}
.dock-tabs {
  height: 24px;
}
.props {
  padding: 10px 9px 0;
}
.actions, .search {
  display: flex;
  gap: 2px;
}
.btn {
  display: flex;
  align-items: center;
  justify-content: center;
  gap: 4px;
  height: 24px;
  border: 1px solid #a9a9a9;
  border-radius: 3px;
  background: linear-gradient(#fff, #ededed);
}
.btn:disabled {
  border-color: #c5c5c5;
  color: #8f8f8f;
}
.actions .btn {
  flex: 1;
  padding-top: 2px;
}
.actions .btn.help {
  flex: 0 0 28px;
  padding-top: 0;
  color: #8fb86f;
  font: 700 18px/20px "Liberation Sans", sans-serif;
}
.search {
  margin: 6px 0;
}
.search .field {
  flex: 1;
  min-width: 0;
}
.search ::placeholder {
  color: #8a8a8a;
  opacity: 1;
}
.btn.gear {
  width: 24px;
  height: 22px;
  background: #dadada;
  border-color: #bcbcbc;
}
.scroll {
  display: flex;
}
.scroll-body {
  flex: 1;
  min-width: 0;
  padding-bottom: 4px;
}
.top-edge {
  height: 2px;
  margin-bottom: 5px;
  border-bottom: 1px solid #b3b3b3;
  background: #fff;
}
.list {
  border: 1px solid #b3b3b3;
  border-right: 0;
  background: #fff;
}
.list label {
  display: flex;
  align-items: center;
}
.list input {
  display: grid;
  flex: none;
  place-items: center;
  width: 14px;
  height: 14px;
  border: 1px solid #bcbcbc;
  background: #fff;
  appearance: none;
}
.list input:checked::before {
  content: "";
  width: 5px;
  height: 9px;
  margin-top: -2px;
  border: solid #000;
  border-width: 0 2px 2px 0;
  transform: rotate(40deg);
}
.list .list-head {
  gap: 5px;
  height: 17px;
  padding: 2px 0 0 3px;
  border-bottom: 1px solid #a9a9a9;
  background: linear-gradient(#fcfcfc, #e8e8e8);
}
.list .list-head input, .list .set-row input, .list .set-row .icon, .list .block-row input {
  margin-bottom: 2px;
}
.sets {
  height: 217px;
  margin-bottom: 4px;
}
.set-row {
  gap: 7px;
  height: 18px;
  padding: 2px 0 0 3px;
}
.maps {
  height: 39px;
}
.inner-tabs {
  height: 28px;
}
.inner-tabs .tab {
  padding: 2px 10px 0;
  background: #e8e8e8;
}
.inner-tabs .tab.active {
  background: #f8f8f8;
}
.tab-page {
  padding: 1px 0 1px 1px;
  border: solid #b3b3b3;
  border-width: 0 0 1px 1px;
}
.blocks {
  height: 90px;
}
.block-row {
  gap: 6px;
  height: 14px;
  padding: 2px 0 0 3px;
}
.v-bar {
  display: flex;
  flex-direction: column;
  width: 14px;
  border-left: 1px solid #b3b3b3;
  background: #e2e2e2;
}
.bar-btn {
  display: grid;
  flex: none;
  place-items: center;
  width: 14px;
  height: 14px;
  background: #f5f5f5;
}
.v-bar .bar-btn {
  width: 100%;
  border-bottom: 1px solid #b9b9b9;
}
.v-bar .end {
  margin-top: auto;
  border-top: 1px solid #b9b9b9;
}
.v-thumb {
  height: 48px;
  margin-top: 27px;
  border: solid #b3b3b3;
  border-width: 1px 0;
  background: linear-gradient(90deg, #fdfdfd, #ededed);
}
.h-bar {
  display: flex;
  height: 14px;
  margin-right: 13px;
  border-top: 1px solid #b9b9b9;
  border-right: 1px solid #b9b9b9;
}
.h-thumb {
  flex: 1;
  border: solid #b3b3b3;
  border-width: 0 1px;
  background: linear-gradient(#fff, #ededed);
}
.h-track {
  width: 34px;
  border-right: 1px solid #b9b9b9;
  background: #e2e2e2;
}
.v-handle {
  align-self: center;
  width: 3px;
  height: 18px;
  margin-left: 3px;
  background: radial-gradient(circle at 1px 1px, #cdcdcd 0.8px, transparent 1px) 0 0 / 3px 3px;
}
.view-tabs {
  height: 27px;
}
.view-tabs .tab {
  display: flex;
  align-items: center;
  justify-content: center;
  gap: 3px;
  width: 109px;
  height: 26px;
}
.view-tabs .tab.plus {
  width: 32px;
  height: 24px;
  background: #ebebeb;
  font-size: 13px;
}
.view-frame {
  border-left: 1px solid #b0b0b0;
}
.view-bar {
  display: flex;
  align-items: center;
  height: 28px;
  padding-right: 1px;
}
.view-bar > button {
  display: grid;
  flex: none;
  place-items: center;
  width: 26px;
  height: 26px;
}
.view-bar .sep {
  height: 13px;
  margin: 0 2px 0 3px;
}
.view-bar b {
  color: #66644f;
  font-size: 11px;
}
.view-name {
  margin-left: auto;
  font: 15px/18px "Liberation Sans", sans-serif;
}
.view-name a {
  color: #000;
  font: 700 11px/14px "DejaVu Sans Condensed", sans-serif;
  text-underline-offset: 2px;
}
.frame-buttons {
  display: flex;
  gap: 1px;
  margin-left: 11px;
}
.frame-buttons .btn {
  width: 26px;
  height: 25px;
}
.render {
  margin-left: 1px;
  margin-right: 1px;
  border: 2px solid #0000f5;
  background: #fff;
  padding: 1px;
}
.scene {
  display: block;
  width: 100%;
  background: #52576e;
}
.vtk {
  fill: #f5f5f5;
  font: 300 17px "Lato", sans-serif;
}
.axis {
  fill: #e8f5e0;
  font: 11px "Liberation Sans", sans-serif;
}
.status {
  display: flex;
  align-items: center;
  gap: 3px;
  height: 26px;
  padding: 1px 0 0 411px;
  border-top: 1px solid #b5b5b5;
}
.status .btn {
  width: 20px;
  height: 19px;
}
.progress {
  flex: 1;
  height: 19px;
  border: 1px solid #fff;
  border-top-color: #a5a5a5;
  border-left-color: #a5a5a5;
}
.size-grip {
  align-self: flex-end;
  margin-left: 8px;
}
</style>
